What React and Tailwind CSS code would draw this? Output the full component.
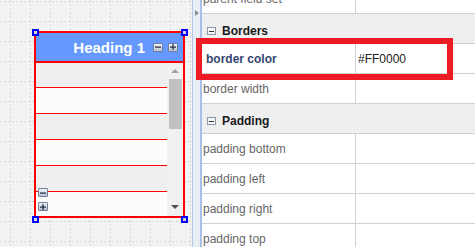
import React from "react";

const gridX = Array.from({ length: 10 }, (_, i) => 10 + i * 20);
const gridY = Array.from({ length: 13 }, (_, i) => 1 + i * 20);

const bodyRows = [
  { h: "h-[25px]", bg: "bg-[#efefef]", line: true },
  { h: "h-[26px]", bg: "bg-[#fcfcfc]", line: true },
  { h: "h-[26px]", bg: "bg-[#efefef]", line: true },
  { h: "h-[26px]", bg: "bg-[#fcfcfc]", line: true },
  { h: "h-[26px]", bg: "bg-[#efefef]", line: true },
  { h: "flex-1", bg: "bg-[#fcfcfc]", line: false },
];

const props = [
  { type: "row", name: "parent field set" },
  { type: "group", name: "Borders" },
  { type: "row", name: "border color", value: "#FF0000", selected: true },
  { type: "row", name: "border width" },
  { type: "group", name: "Padding" },
  { type: "row", name: "padding bottom" },
  { type: "row", name: "padding left" },
  { type: "row", name: "padding right" },
  { type: "row", name: "padding top" },
];

// small bevelled +/- button used on the widget
const ToolBtn = ({ plus, className = "" }) => (
  <span
    className={`flex h-[9px] w-[10px] items-center justify-center rounded-[1px] border border-[#6f7f99] bg-gradient-to-b from-[#f4f6f9] to-[#b9c3d1] ${className}`}
  >
    <svg width="6" height="6" viewBox="0 0 6 6">
      <rect x="0" y="2.5" width="6" height="1.2" fill="#1f2b3d" />
      {plus && <rect x="2.4" y="0" width="1.2" height="6" fill="#1f2b3d" />}
    </svg>
  </span>
);

const Handle = ({ className }) => (
  <div
    className={`absolute h-[7px] w-[7px] border-2 border-[#0000ff] bg-[#d6d6d6] ${className}`}
  />
);

const GroupIcon = () => (
  <span className="flex h-[8px] w-[9px] items-center justify-center border border-[#8b97a8] bg-[#f6f7f9]">
    <span className="h-px w-[5px] bg-[#333]" />
  </span>
);

export default function App() {
  return (
    <div className="relative flex h-[247px] w-[475px] overflow-hidden bg-white font-['Liberation_Sans',Arial,sans-serif]">
      {/* design canvas */}
      <div className="relative h-full w-[192px] shrink-0 bg-[#f3f3f3]">
        <svg className="absolute inset-0" width="192" height="247">
          {gridX.map((x) => (
            <line
              key={"v" + x}
              x1={x + 0.5}
              y1="0"
              x2={x + 0.5}
              y2="247"
              stroke="#d9d9d9"
              strokeDasharray="2 2"
            />
          ))}
          {gridY.map((y) => (
            <line
              key={"h" + y}
              x1="0"
              y1={y + 0.5}
              x2="192"
              y2={y + 0.5}
              stroke="#d9d9d9"
              strokeDasharray="2 2"
            />
          ))}
        </svg>

        {/* widget */}
        <div className="absolute left-[34px] top-[31px] flex h-[187px] w-[151px] flex-col border-2 border-[#ff0000]">
          <div className="flex h-[30px] shrink-0 items-center justify-end border-b-2 border-[#ff0000] bg-[#6699ff] pr-[5px]">
            <span className="mr-[8px] text-[15px] font-bold leading-none text-white">
              Heading 1
            </span>
            <ToolBtn className="mr-[5px]" />
            <ToolBtn plus />
          </div>
          <div className="flex flex-1">
            <div className="flex flex-1 flex-col">
              {bodyRows.map((r, i) => (
                <div
                  key={i}
                  className={`${r.h} ${r.bg} ${r.line ? "border-b border-[#ff0000]" : ""}`}
                />
              ))}
            </div>
            <div className="flex w-[16px] flex-col bg-[#f1f1f1]">
              <div className="flex h-[16px] items-center justify-center">
                <svg width="8" height="4" viewBox="0 0 8 4">
                  <polygon points="0,4 8,4 4,0" fill="#a3a3a3" />
                </svg>
              </div>
              <div className="ml-[2px] h-[50px] w-[13px] bg-[#c1c1c1]" />
              <div className="flex-1" />
              <div className="flex h-[16px] items-center justify-center pb-[3px]">
                <svg width="8" height="4" viewBox="0 0 8 4">
                  <polygon points="0,0 8,0 4,4" fill="#505050" />
                </svg>
              </div>
            </div>
          </div>
          <ToolBtn className="absolute left-[2px] top-[155px]" />
          <ToolBtn plus className="absolute left-[2px] top-[169px]" />
        </div>

        <Handle className="left-[32px] top-[29px]" />
        <Handle className="left-[181px] top-[29px]" />
        <Handle className="left-[32px] top-[216px]" />
        <Handle className="left-[181px] top-[216px]" />
      </div>

      {/* splitter */}
      <div className="flex w-[10px] shrink-0 flex-col border-l border-r-2 border-l-[#b4c8e6] border-r-[#a6c0e6] bg-[#e9eef4] pl-[2px] pt-[10px]">
        <svg width="4" height="6" viewBox="0 0 4 6">
          <polygon points="0,0 4,3 0,6" fill="#8a8f99" />
        </svg>
      </div>

      {/* property grid */}
      <div className="flex flex-1 flex-col text-[12px] leading-none">
        {props.map((p, i) =>
          p.type === "group" ? (
            <div
              key={i}
              className={`flex h-[30px] shrink-0 items-center gap-[6px] border-b border-[#d0d0d0] bg-[#efefef] pl-[5px] pt-[5px] ${i === 0 ? "-mt-[16px]" : ""}`}
            >
              <GroupIcon />
              <span className="font-bold text-[#1a1a1a]">{p.name}</span>
            </div>
          ) : (
            <div
              key={i}
              className={`flex h-[30px] shrink-0 border-b border-[#d0d0d0] ${i === 0 ? "-mt-[16px]" : ""}`}
            >
              <div
                className={`flex w-[154px] items-center border-r border-[#d0d0d0] ${p.selected ? "pl-[4px] font-bold text-[#34466f]" : "pl-px text-[#666]"}`}
              >
                {p.name}
              </div>
              <div className="flex flex-1 items-center pl-[2px] text-[#222]">
                {p.value}
              </div>
            </div>
          )
        )}
      </div>

      {/* highlight annotation */}
      <div className="absolute left-[196px] top-[38px] h-[42px] w-[257px] border-[6px] border-[#ed1c24]" />
    </div>
  );
}
